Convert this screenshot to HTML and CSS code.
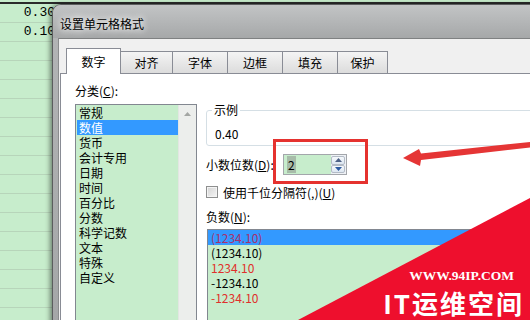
FILE: index.html
```html
<!DOCTYPE html>
<html lang="zh-CN">
<head>
  <meta charset="UTF-8" />
  <meta name="viewport" content="width=device-width, initial-scale=1.0"/>
  <title>设置单元格格式</title>
  <link rel="stylesheet" href="styles.css">
</head>
<body>

<!-- Spreadsheet behind the dialog -->
<div class="sheet">
  <div class="sheet-row"><div class="cell">0.30</div><div class="cell"></div><div class="cell"></div></div>
  <div class="sheet-row"><div class="cell">0.10</div><div class="cell"></div><div class="cell"></div></div>
  <div class="sheet-row"><div class="cell"></div><div class="cell"></div><div class="cell"></div></div>
  <div class="sheet-row"><div class="cell"></div><div class="cell"></div><div class="cell"></div></div>
  <div class="sheet-row"><div class="cell"></div><div class="cell"></div><div class="cell"></div></div>
  <div class="sheet-row"><div class="cell"></div><div class="cell"></div><div class="cell"></div></div>
  <div class="sheet-row"><div class="cell"></div><div class="cell"></div><div class="cell"></div></div>
  <div class="sheet-row"><div class="cell"></div><div class="cell"></div><div class="cell"></div></div>
  <div class="sheet-row"><div class="cell"></div><div class="cell"></div><div class="cell"></div></div>
  <div class="sheet-row"><div class="cell"></div><div class="cell"></div><div class="cell"></div></div>
  <div class="sheet-row"><div class="cell"></div><div class="cell"></div><div class="cell"></div></div>
  <div class="sheet-row"><div class="cell"></div><div class="cell"></div><div class="cell"></div></div>
  <div class="sheet-row"><div class="cell"></div><div class="cell"></div><div class="cell"></div></div>
  <div class="sheet-row"><div class="cell"></div><div class="cell"></div><div class="cell"></div></div>
  <div class="sheet-row"><div class="cell"></div><div class="cell"></div><div class="cell"></div></div>
  <div class="sheet-row"><div class="cell"></div><div class="cell"></div><div class="cell"></div></div>
  <div class="sheet-row"><div class="cell"></div><div class="cell"></div><div class="cell"></div></div>
</div>

<!-- Format Cells dialog -->
<div class="dialog">
  <div class="dialog-title">设置单元格格式</div>
  <div class="dialog-body">
    <ul class="tabs">
      <li class="tab active" style="width:55px">数字</li>
      <li class="tab" style="width:53px">对齐</li>
      <li class="tab" style="width:56px">字体</li>
      <li class="tab" style="width:56px">边框</li>
      <li class="tab" style="width:56px">填充</li>
      <li class="tab" style="width:51px">保护</li>
    </ul>

    <div class="tab-panel">
      <div class="category">
        <div class="field-label">分类(<u>C</u>):</div>
        <div class="listbox category-list">
          <ul class="list-items">
            <li>常规</li>
            <li class="selected">数值</li>
            <li>货币</li>
            <li>会计专用</li>
            <li>日期</li>
            <li>时间</li>
            <li>百分比</li>
            <li>分数</li>
            <li>科学记数</li>
            <li>文本</li>
            <li>特殊</li>
            <li>自定义</li>
          </ul>
          <div class="scrollbar">
            <svg width="7" height="4" viewBox="0 0 7 4"><path d="M0 4 L3.5 0 L7 4 Z" fill="#a3a6a3"/></svg>
          </div>
        </div>
      </div>

      <div class="options">
        <fieldset class="sample">
          <legend>示例</legend>
          <div class="sample-value">0.40</div>
        </fieldset>

        <div class="decimal-row">
          <label class="decimal-label">小数位数(<u>D</u>):</label>
          <div class="spinbox">
            <span class="spin-value"><span class="spin-sel">2</span></span>
            <div class="spin-buttons">
              <span class="spin-btn"><svg width="7" height="4" viewBox="0 0 7 4"><path d="M0 4 L3.5 0 L7 4 Z" fill="#4d6185"/></svg></span>
              <span class="spin-btn"><svg width="7" height="4" viewBox="0 0 7 4"><path d="M0 0 L7 0 L3.5 4 Z" fill="#2c5aa0"/></svg></span>
            </div>
          </div>
        </div>

        <div class="check-row"><span class="checkbox"></span>使用千位分隔符(,)(<u>U</u>)</div>

        <div class="field-label neg-label">负数(<u>N</u>):</div>
        <ul class="listbox negative-list">
          <li class="selected red">(1234.10)</li>
          <li>(1234.10)</li>
          <li class="red">1234.10</li>
          <li>-1234.10</li>
          <li class="red">-1234.10</li>
        </ul>
      </div>
    </div>
  </div>
</div>

<!-- Annotation -->
<div class="callout-box"></div>
<svg class="callout-arrow" width="130" height="30" viewBox="0 0 130 30">
  <polygon points="3,20 19,11 21,15.5 130,4 130,9.5 21,22 20,28" fill="#e53535"/>
</svg>

<!-- Watermark -->
<div class="watermark">
  <div class="wm-url">WWW.94IP.COM</div>
  <div class="wm-name">IT运维空间</div>
</div>

</body>
</html>
```

FILE: styles.css
```css
* {
  box-sizing: border-box;
}

body {
  margin: 0;
  width: 530px;
  height: 320px;
  overflow: hidden;
  position: relative;
  background: #c7edcc;
  font-family: "Noto Sans CJK SC", "Noto Sans", sans-serif;
  font-size: 12px;
  color: #000;
}

ul {
  list-style: none;
  margin: 0;
  padding: 0;
}

u {
  text-decoration: underline;
}

/* Spreadsheet */
.sheet {
  padding-top: 2px;
}

.sheet-row {
  display: flex;
  height: 19px;
  border-bottom: 1px solid #b7d5ba;
}

.sheet-row:first-child {
  height: 21px;
  border-top: 2px solid #2b2b2b;
}

.cell {
  width: 64px;
  border-right: 1px solid #b7d5ba;
  padding-right: 8px;
  text-align: right;
  font-family: "Liberation Mono", monospace;
  font-size: 13px;
  line-height: 18px;
}

.sheet-row:first-child .cell:first-child {
  border-right-color: #2b2b2b;
}

/* Dialog */
.dialog {
  position: absolute;
  left: 52px;
  top: 4px;
  width: 500px;
  height: 330px;
  display: flex;
  flex-direction: column;
  border: 1px solid #5b5d5e;
  border-radius: 9px 0 0 0;
  background: linear-gradient(to bottom, #b3b5b6, #a4a6a7);
  box-shadow: -2px 0 5px rgba(0, 0, 0, 0.45);
  overflow: hidden;
}

.dialog-title {
  height: 33px;
  padding: 5px 0 0 7px;
  line-height: 28px;
  font-size: 12px;
  background: linear-gradient(to bottom, #c2c4c5, #a6a8a9);
  text-shadow: 0 0 6px #fff, 0 0 8px #f4f4f4;
}

.dialog-body {
  flex: 1;
  display: flex;
  flex-direction: column;
  margin-left: 5px;
  padding-top: 9px;
  background: #f0f0f0;
  border-top: 1px solid #7f8182;
  border-left: 1px solid #8a8c8d;
}

.tabs {
  display: flex;
  align-items: flex-end;
  height: 25px;
  margin-left: 7px;
}

.tab {
  height: 22px;
  margin-right: -1px;
  border: 1px solid #898c95;
  border-bottom: none;
  background: linear-gradient(to bottom, #f4f4f4, #dcdcdc);
  text-align: center;
  line-height: 21px;
}

.tab.active {
  position: relative;
  z-index: 1;
  height: 26px;
  margin-bottom: -1px;
  padding-top: 1px;
  background: #fff;
  line-height: 24px;
}

.tab-panel {
  flex: 1;
  display: flex;
  margin-left: 1px;
  padding: 9px 0 0 14px;
  background: #fff;
  border-top: 1px solid #898c95;
  border-left: 1px solid #898c95;
}

.field-label {
  line-height: 16px;
}

/* Category list */
.category {
  width: 122px;
}

.listbox {
  border: 1px solid #828790;
  background: #c7edcc;
}

.category-list {
  display: flex;
  height: 240px;
  margin-top: 5px;
}

.list-items {
  flex: 1;
  padding-left: 1px;
}

.list-items li,
.negative-list li {
  line-height: 15px;
  white-space: nowrap;
}

.list-items li {
  padding-left: 2px;
}

.selected {
  background: #3399ff;
  color: #fff;
}

.scrollbar {
  width: 18px;
  padding-top: 7px;
  background: #eceeec;
  border-left: 1px solid #e2e6e2;
  text-align: center;
}

.scrollbar svg {
  display: block;
  margin: 0 auto;
}

/* Right column */
.options {
  flex: 1;
  margin-left: 9px;
}

.sample {
  margin: 19px 0 0;
  padding: 0 0 3px 5px;
  border: 1px solid #d5dfe5;
  border-radius: 3px;
  min-width: 0;
}

.sample legend {
  padding: 0 2px;
  line-height: 16px;
}

.sample-value {
  margin-top: 8px;
  padding-left: 3px;
  line-height: 16px;
}

.decimal-row {
  display: flex;
  align-items: center;
  height: 21px;
  margin-top: 8px;
}

.decimal-label {
  width: 77px;
}

.spinbox {
  display: flex;
  width: 64px;
  height: 21px;
  border: 1px solid #a3a6ab;
  background: #c7edcc;
}

.spin-value {
  flex: 1;
  padding-left: 3px;
  line-height: 19px;
}

.spin-sel {
  background: #a7bca9;
  padding: 0 1px;
}

.spin-buttons {
  display: flex;
  flex-direction: column;
  width: 15px;
  padding: 1px 1px 1px 0;
  background: #eef1f5;
}

.spin-btn {
  flex: 1;
  display: flex;
  align-items: center;
  justify-content: center;
  border: 1px solid #b3bbc6;
  border-radius: 2px;
  background: linear-gradient(to bottom, #f6f9fc, #dce6f1);
}

.spin-btn svg {
  display: block;
}

.check-row {
  display: flex;
  align-items: center;
  height: 16px;
  margin-top: 9px;
}

.checkbox {
  width: 12px;
  height: 12px;
  margin-right: 5px;
  border: 1px solid #8e8f8f;
  background: linear-gradient(135deg, #d3d3d3, #f6f6f6);
  box-shadow: inset 0 0 0 1px #f4f4f4;
}

.neg-label {
  margin-top: 9px;
}

.negative-list {
  height: 120px;
  margin: 4px 0 0 1px;
}

.negative-list li {
  padding-left: 3px;
}

.negative-list .red {
  color: #e0302b;
}

.negative-list .selected.red {
  color: #a8306e;
}

/* Annotation */
.callout-box {
  position: absolute;
  left: 273px;
  top: 139px;
  width: 95px;
  height: 45px;
  border: 3px solid #e5322f;
}

.callout-arrow {
  position: absolute;
  left: 400px;
  top: 138px;
}

/* Watermark */
.watermark {
  position: absolute;
  left: 298px;
  top: 198px;
  width: 232px;
  height: 122px;
  display: flex;
  flex-direction: column;
  align-items: flex-end;
  justify-content: flex-end;
  padding: 0 6px 2px 0;
  background: #ee0f2d;
  clip-path: polygon(100% 0, 100% 100%, 0 100%);
  color: #fff;
}

.wm-url {
  margin-right: 10px;
  font-family: "Liberation Serif", serif;
  font-weight: bold;
  font-size: 13.5px;
  line-height: 16px;
}

.wm-name {
  margin-top: 3px;
  font-family: "Noto Sans CJK SC", sans-serif;
  font-weight: bold;
  font-size: 26px;
  line-height: 31px;
  letter-spacing: 2px;
}
```
